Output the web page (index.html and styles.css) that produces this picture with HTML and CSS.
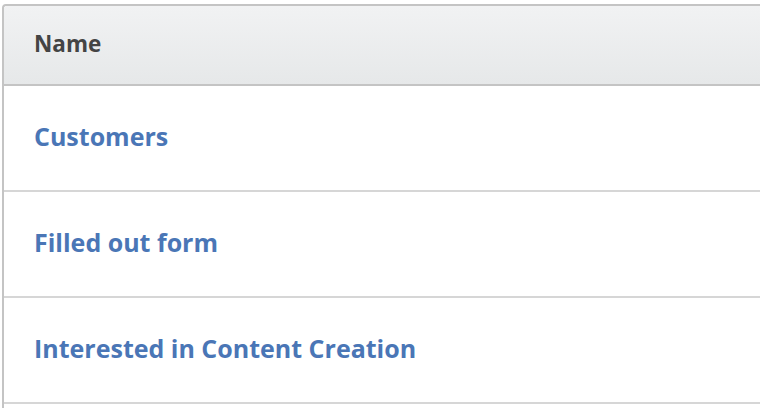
FILE: index.html
```html
<!DOCTYPE html>
<html>
<head>
<meta charset="utf-8">
<link rel="stylesheet" href="styles.css">
</head>
<body>
<div class="table">
  <div class="head">Name</div>
  <div class="row"><a class="link" href="#">Customers</a></div>
  <div class="row"><a class="link" href="#">Filled out form</a></div>
  <div class="row"><a class="link" href="#">Interested in Content Creation</a></div>
  <div class="row"></div>
</div>
</body>
</html>
```
FILE: styles.css
```css
html, body {
  margin: 0;
  padding: 0;
  background: #ffffff;
  overflow: hidden;
}
body {
  padding: 4px 0 0 2px;
  height: 408px;
  box-sizing: border-box;
  font-family: "Open Sans", "Liberation Sans", sans-serif;
}
.table {
  border-top: 2px solid #c4c4c4;
  border-left: 2px solid #c4c4c4;
  border-top-left-radius: 4px;
  height: 404px;
  box-sizing: border-box;
  overflow: hidden;
}
.head {
  height: 80px;
  box-sizing: border-box;
  background: linear-gradient(#f1f2f3, #e6e8e9);
  border-bottom: 2px solid #c4c4c4;
  border-top-left-radius: 2px;
  display: flex;
  align-items: center;
  padding: 0 0 4px 30px;
  font-weight: 700;
  font-size: 22.5px;
  color: #444444;
}
.row {
  height: 106px;
  box-sizing: border-box;
  border-bottom: 2px solid #d6d6d6;
  display: flex;
  align-items: center;
  padding: 0 0 4px 30px;
}
.link {
  color: #4a76b6;
  font-weight: 700;
  font-size: 25px;
  text-decoration: none;
}
```
